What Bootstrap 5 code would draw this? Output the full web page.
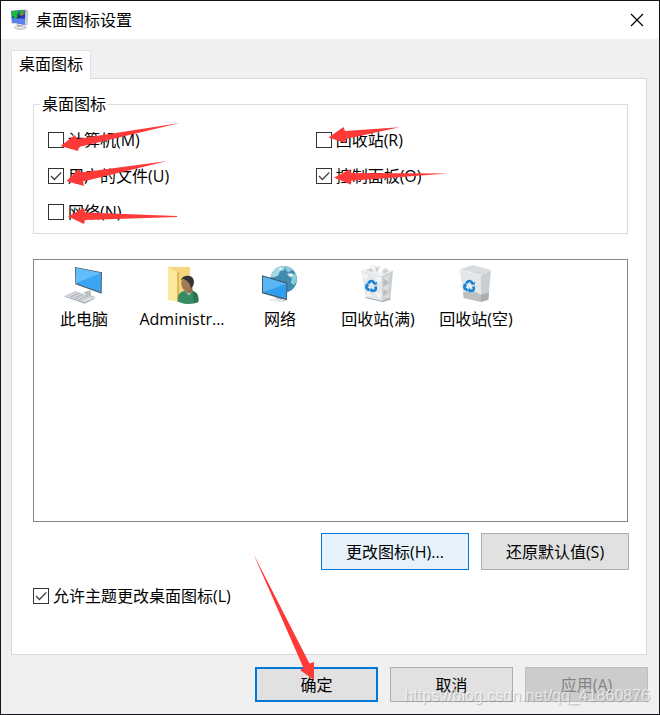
<!DOCTYPE html>
<html lang="zh-CN">
<head>
<meta charset="utf-8">
<meta name="viewport" content="width=device-width, initial-scale=1">
<title>桌面图标设置</title>
<link href="https://cdn.jsdelivr.net/npm/bootstrap@5.3.0/dist/css/bootstrap.min.css" rel="stylesheet">
<style>
body { font: 16px/24px "Open Sans", "Noto Sans CJK SC", sans-serif; color: #000; background: #f0f0f0; }
.dialog { border: 1px solid #17141a; background: #f0f0f0; }
.titlebar { height: 38px; padding: 0 8px; gap: 5px; }
.close-x { width: 28px; height: 28px; padding: 0; border: 0; background: none; }
.dialog-body { padding: 11px 12px 12px 10px; }
.nav-tabs.tabs { border: 0; }
.tabs .nav-link { color: #000; background: #fff; border: 1px solid #d9d9d9; border-bottom: 0; border-radius: 0; padding: 1px 7px 3px; margin: 0; position: relative; z-index: 1; }
.tabs .nav-link.active { margin-bottom: -1px; }
.pane { border: 1px solid #d9d9d9; padding: 13px 18px 20px 21px; }
.group { border: 1px solid #dcdcdc; padding: 12px 14px 9px; margin-bottom: 25px; }
.group legend { font-size: 16px; line-height: 24px; padding: 0 1px 0 2px; margin: 0 0 0 -8px; }
.opt { height: 24px; gap: 4px; }
.opt .form-check-input { width: 16px; height: 16px; margin: 0; flex: none; border: 1px solid #333; border-radius: 0; background-color: #fff; }
.opt .form-check-input:checked { background-color: #fff; border-color: #333; background-size: 14px 14px; background-image: url("data:image/svg+xml,%3Csvg xmlns='http://www.w3.org/2000/svg' viewBox='0 0 14 14'%3E%3Cpath d='M2 7l3.4 3.5L12.2 3.5' fill='none' stroke='%23444' stroke-width='1.3'/%3E%3C/svg%3E"); }
.rows { display: grid; grid-template-columns: 9fr 10fr; row-gap: 12px; }
.icon-view { border: 1px solid #828790; min-height: 263px; padding: 5px 1px; }
.desk-icon { width: 98px; }
.desk-icon svg { width: 40px; height: 40px; margin-bottom: 2px; }
.btn.push { --bs-btn-padding-x: 4px; --bs-btn-padding-y: 4px; --bs-btn-font-size: 16px; --bs-btn-color: #000; --bs-btn-bg: #e1e1e1; --bs-btn-border-color: #adadad; --bs-btn-border-radius: 0; --bs-btn-disabled-color: #838383; --bs-btn-disabled-bg: #ccc; --bs-btn-disabled-border-color: #bfbfbf; --bs-btn-disabled-opacity: 1; width: 123px; height: 35px; line-height: 24px; }
.btn.push.wide { width: 148px; height: 37px; }
.btn.push.hot { --bs-btn-bg: #e5f1fb; --bs-btn-border-color: #0078d7; }
.btn.push.primary { border: 2px solid #0078d7; }
.actions { margin: 11px -1px 14px 0; gap: 12px; }
.footer-buttons { gap: 12px; padding-top: 12px; margin-right: -1px; }
.arrows { pointer-events: none; z-index: 5; }
.watermark { right: 9px; bottom: 6px; z-index: 6; font: 16px/24px "Liberation Sans", sans-serif; color: rgba(255,255,255,.65); text-shadow: 1px 1px 1px rgba(90,90,90,.35); pointer-events: none; }
</style>
<script src="https://cdn.jsdelivr.net/npm/bootstrap@5.3.0/dist/js/bootstrap.bundle.min.js"></script>
</head>
<body>
<main class="dialog position-relative min-vh-100 d-flex flex-column">
  <header class="titlebar bg-white d-flex align-items-center">
    <svg width="22" height="24" viewBox="27 23 66 72" aria-hidden="true">
      <ellipse cx="61" cy="81" rx="19" ry="8" fill="#cfcfcf"/><ellipse cx="59" cy="79" rx="13" ry="4" fill="#f1f1f1"/>
      <path d="M50 70h18l2 9H51z" fill="#aaa"/>
      <path d="M76 27l9 4-2 42-7 3z" fill="#c9c9d0"/>
      <path d="M32 30l46-3-1 50-44-7z" fill="#dcdce0"/>
      <path d="M34 32l42-3-1 44-39-7z" fill="#2439c6"/>
      <path d="M36 54l39 1v18l-38-7z" fill="#5a82ee"/>
      <path d="M35 32l18-1 4 5-7 8 5 3-2 8-9 1-3-7-5-3zM59 32l15-3-1 13-10 6-5-5z" fill="#19bc38"/>
      <path d="M77 30L64 46l-7 3 2-6z" fill="#c4522b"/><path d="M58 44l5 3-6 6-9 1z" fill="#20234e"/>
    </svg>
    <span>桌面图标设置</span>
    <button type="button" class="close-x ms-auto d-flex align-items-center justify-content-center" aria-label="关闭">
      <svg width="14" height="14" viewBox="0 0 14 14"><path d="M1 1l12 12M13 1L1 13" fill="none" stroke="#000" stroke-width="1.2"/></svg>
    </button>
  </header>

  <form class="dialog-body flex-grow-1 d-flex flex-column">
    <nav class="nav nav-tabs tabs"><a class="nav-link active" href="#icons">桌面图标</a></nav>
    <section id="icons" class="pane bg-white flex-grow-1 d-flex flex-column">
      <fieldset class="group">
        <legend class="float-none w-auto">桌面图标</legend>
        <div class="rows">
          <div class="opt d-flex align-items-center"><input class="form-check-input" type="checkbox" id="c1"><label for="c1">计算机(M)</label></div>
          <div class="opt d-flex align-items-center"><input class="form-check-input" type="checkbox" id="c2"><label for="c2">回收站(R)</label></div>
          <div class="opt d-flex align-items-center"><input class="form-check-input" type="checkbox" id="c3" checked><label for="c3">用户的文件(U)</label></div>
          <div class="opt d-flex align-items-center"><input class="form-check-input" type="checkbox" id="c4" checked><label for="c4">控制面板(O)</label></div>
          <div class="opt d-flex align-items-center"><input class="form-check-input" type="checkbox" id="c5"><label for="c5">网络(N)</label></div>
        </div>
      </fieldset>

      <div class="icon-view d-flex flex-wrap align-content-start">
        <div class="desk-icon d-flex flex-column align-items-center">
          <svg viewBox="42 30 120 120" aria-hidden="true">
            <path d="M101 112l20-6 3 16 14 4-24 8-17-6 14-4z" fill="#b9bec2"/>
            <path d="M75 36l81 16-1 64-79-28z" fill="#50616d"/>
            <path d="M78 39l75 15-1 57-74-26z" fill="#39a5f3"/><path d="M78 39l75 15-75 31z" fill="#62bdf9"/>
            <path d="M44 122l32-14 57 20-29 16z" fill="#e1e5e8"/>
            <path d="M44 122l60 20 29-14v4l-29 14-60-21z" fill="#aab0b5"/>
            <path d="M51 120l49 17M58 117l50 17M65 114l50 16M72 110l52 18M60 127l29-13M73 131l28-13M86 135l28-13" stroke="#929ba3" stroke-width="1.5" fill="none"/>
          </svg>
          <span>此电脑</span>
        </div>
        <div class="desk-icon d-flex flex-column align-items-center">
          <svg viewBox="21 30 120 120" aria-hidden="true">
            <path d="M39 36h65v98H39z" fill="#e9c362"/>
            <path d="M39 36h65v82l-36 10z" fill="#f5d77f"/>
            <path d="M39 36l28 14v91l-28-8z" fill="#fde79b"/><path d="M67 50v91l5-2V50z" fill="#dbb24f"/>
            <path d="M68 132q0-19 20-25l21-1q20 6 21 22v13q-15 7-33 6-19-1-29-8z" fill="#388c63"/>
            <path d="M112 107q18 7 18 23v11l-13 4z" fill="#297650"/>
            <path d="M90 108l22-2-10 15z" fill="#ebe5da"/>
            <path d="M92 92h19l2 15-12 9-10-8z" fill="#8f6547"/>
            <path d="M79 78q-1 18 7 26 12 13 22-3l5-22-10-12z" fill="#a37858"/>
            <path d="M77 78q3-15 19-16 15-1 20 12 3 14-6 25-5-3-6-12l-8-10-10-4q-6 1-9 5z" fill="#343431"/>
          </svg>
          <span>Administr...</span>
        </div>
        <div class="desk-icon d-flex flex-column align-items-center">
          <svg viewBox="315 30 120 120" aria-hidden="true">
            <circle cx="386" cy="73" r="40" fill="#408cae"/>
            <path d="M347 66a40 40 0 0 1 43-33l-3 13-12 3-6 13-13 5z" fill="#a6d8e6"/>
            <path d="M390 33q19 1 28 16l-9-3-9 7-8-9zM420 55q7 10 5 25l-9 11-9-8 4-13-9-9z" fill="#8dc9dc"/>
            <path d="M396 57l14-2 5 7-10 4zM370 42l7-5 4 4-6 5z" fill="#e6f5f7"/>
            <path d="M360 124l19 5 2 5 12 2q-10 7-25 4l-28-5 24-3z" fill="#bbc2c8"/>
            <path d="M340 134q15-5 28-1l20 4q-8 5-21 3z" fill="#edf0f1"/>
            <path d="M321 61l76 22-1 53-75-21z" fill="#465763"/>
            <path d="M324 65l70 21v45l-70-19z" fill="#2f9eef"/><path d="M324 65l70 21-70 26z" fill="#57b7f8"/>
          </svg>
          <span>网络</span>
        </div>
        <div class="desk-icon d-flex flex-column align-items-center">
          <svg viewBox="84 30 120 120" aria-hidden="true">
            <path d="M95 47l61 15 1 78-50-12z" fill="#e4e7e9"/><path d="M156 62l33-15-8 86-24 7z" fill="#cbcfd2"/>
            <path d="M95 47l24-8 6-9 13 4 12-3 6 10 10-4 8 6 15 4-33 15z" fill="#eceeef"/>
            <path d="M108 47l17-7 6 10zM136 36l13 4-9 12zM158 46l12-4 4 9-14 6z" fill="#cdd1d4"/>
            <path d="M123 34l11 2-4 9zM150 38l8 5-6 12-8-3z" fill="#fff"/>
            <path d="M98 55l18 6-11 18zM136 66l18 2-8 20zM112 112l14 10-16 3zM136 112l17 5-4 16z" fill="#f5f6f7"/>
            <path d="M160 68l22-11-9 20zM159 98l21-10-8 20zM160 128l16-14 1 14z" fill="#dde0e2"/>
            <path d="M160 72l15 10-15 12zM160 106l14 4-14 14z" fill="#b9bec2"/>
            <path d="M106 126l51 12 24-8v4l-24 7-50-12z" fill="#a4a9ac"/>
            <g id="recycle" fill="none" stroke="#1784d8" stroke-width="8">
              <path d="M115 86q3-9 11-8 5 1 8 9"/><path d="M136 94q4 11-3 13-4 1-10-1"/><path d="M119 105q-10-2-10-9 0-4 4-8"/>
              <path d="M129 87l10 4 3-11zM126 98l-7 8 8 7zM105 89l9-4 3 10z" fill="#1784d8" stroke="none"/>
            </g>
          </svg>
          <span>回收站(满)</span>
        </div>
        <div class="desk-icon d-flex flex-column align-items-center">
          <svg viewBox="378 30 120 120" aria-hidden="true">
            <path d="M389 44l40-14 54 15-31 14z" fill="#c4cacc"/><path d="M394 45l35-11v19zM429 34l48 12-25 9-23-5z" fill="#dadddf"/>
            <path d="M389 44l63 15v82l-51-12z" fill="#e5e8ea"/><path d="M452 59l31-14-8 89-23 7z" fill="#cbcfd1"/>
            <path d="M399 112l29-6 24 13v22l-51-12z" fill="#bdc1c3"/><path d="M452 119l25-7-2 22-23 7z" fill="#a9aeb1"/>
            <path d="M389 44l40-13 54 14-31 14z" fill="none" stroke="#f3f4f4" stroke-width="2"/>
            <use href="#recycle" x="294"/>
          </svg>
          <span>回收站(空)</span>
        </div>
      </div>

      <div class="actions d-flex justify-content-end">
        <button type="button" class="btn push wide hot">更改图标(H)...</button>
        <button type="button" class="btn push wide">还原默认值(S)</button>
      </div>
      <div class="opt d-flex align-items-center"><input class="form-check-input" type="checkbox" id="c6" checked><label for="c6">允许主题更改桌面图标(L)</label></div>
    </section>
    <div class="footer-buttons d-flex justify-content-end">
      <button type="submit" class="btn push primary">确定</button>
      <button type="button" class="btn push">取消</button>
      <button type="button" class="btn push" disabled>应用(A)</button>
    </div>
  </form>

  <svg class="arrows position-absolute top-0 start-0" width="658" height="713" viewBox="1 1 658 713" fill="#fd3a38" aria-hidden="true">
    <path d="M60.5 146L75 135l2 4 103-16-101 24-1 4z"/>
    <path d="M66.5 181L79 169l2 3.500 86.500-11.500L83 181.500l1 4.500z"/>
    <path d="M68 216.500L84 208l1 4.500 92 3.500v1l-92 3-1 4z"/>
    <path d="M328.500 137.500L343.500 127l1.500 4 54.500-3.700L346 139l-1 4z"/>
    <path d="M334 177.500l16.500-8.500.5 4 97 .5-97 7.200v4z"/>
    <path d="M253.500 554l56 109.500 4.500-1.500v18l-14-10 3.500-2z"/>
  </svg>
  <div class="watermark position-absolute">https://blog.csdn.net/qq_41860876</div>
</main>
</body>
</html>
